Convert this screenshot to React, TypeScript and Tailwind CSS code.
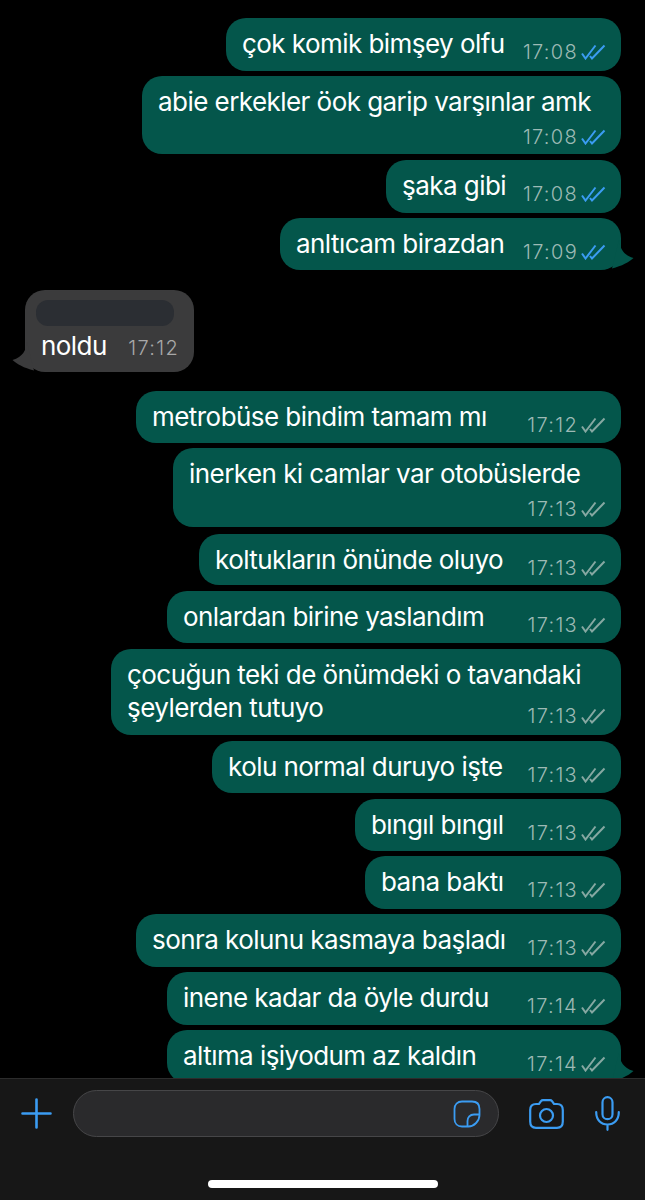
const messages = [
  { id: 1, text: 'çok komik bimşey olfu', time: '17:08', read: true, box: 'mt-[18px] h-[53px] w-[395px]' },
  { id: 2, text: 'abie erkekler öok garip varşınlar amk', time: '17:08', read: true, stacked: true, box: 'mt-[5px] h-[78px] w-[479px]' },
  { id: 3, text: 'şaka gibi', time: '17:08', read: true, box: 'mt-[6px] h-[53px] w-[235px]' },
  { id: 4, text: 'anltıcam birazdan', time: '17:09', read: true, tail: true, box: 'mt-[5px] h-[52px] w-[341px]' },
  { id: 6, text: 'metrobüse bindim tamam mı', time: '17:12', box: 'mt-[19px] h-[52px] w-[485px]' },
  { id: 7, text: 'inerken ki camlar var otobüslerde', time: '17:13', stacked: true, box: 'mt-[5px] h-[79px] w-[448px]' },
  { id: 8, text: 'koltukların önünde oluyo', time: '17:13', box: 'mt-[7px] h-[51px] w-[422px]' },
  { id: 9, text: 'onlardan birine yaslandım', time: '17:13', box: 'mt-[6px] h-[52px] w-[454px]' },
  { id: 10, text: 'çocuğun teki de önümdeki o tavandaki', second: 'şeylerden tutuyo', time: '17:13', box: 'mt-[6px] h-[86px] w-[510px]' },
  { id: 11, text: 'kolu normal duruyo işte', time: '17:13', box: 'mt-[6px] h-[52px] w-[409px]' },
  { id: 12, text: 'bıngıl bıngıl', time: '17:13', box: 'mt-[6px] h-[52px] w-[266px]' },
  { id: 13, text: 'bana baktı', time: '17:13', box: 'mt-[5px] h-[53px] w-[256px]' },
  { id: 14, text: 'sonra kolunu kasmaya başladı', time: '17:13', box: 'mt-[5px] h-[53px] w-[485px]' },
  { id: 15, text: 'inene kadar da öyle durdu', time: '17:14', box: 'mt-[5px] h-[53px] w-[454px]' },
  { id: 16, text: 'altıma işiyodum az kaldın', time: '17:14', tail: true, box: 'mt-[5px] h-[53px] w-[454px]' },
];

const bodyText = 'text-[26px] leading-[33px] tracking-[-0.55px] text-white';

function Ticks({ read }: { read?: boolean }) {
  return (
    <svg className={read ? 'h-[16px] w-[25px] text-[#3b9cf2]' : 'h-[16px] w-[25px] text-[#86a8a2]'} viewBox="0 0 25 16" fill="none" stroke="currentColor" strokeWidth={2}>
      <path d="M1 9.5 L4.5 14.5 L14.5 1.5" />
      <path d="M9 12 L11 14.5 L23.5 1.5" />
    </svg>
  );
}

function Tail({ className, fill }: { className: string; fill: string }) {
  return (
    <svg className={className} viewBox="0 0 22 30" fill={fill}>
      <path d="M7 0 C8 8 11 15 21.5 18 C17 22 10 26 0 28.5 Z" />
    </svg>
  );
}

function Meta({ time, read }: { time: string; read?: boolean }) {
  return (
    <div className="flex shrink-0 items-center gap-[3px]">
      <span className="text-[20px] font-light leading-[22px] tracking-[1.3px] text-[#9dbab5]">{time}</span>
      <Ticks read={read} />
    </div>
  );
}

function Outgoing({ m }: { m: (typeof messages)[number] }) {
  return (
    <div className={`relative flex shrink-0 flex-col rounded-[20px] bg-[#04564b] pl-4 pr-[15px] pt-[9px] ${m.box}`}>
      {m.second ? (
        <>
          <div className={bodyText}>{m.text}</div>
          <div className="flex items-start justify-between">
            <span className={bodyText}>{m.second}</span>
            <div className="mt-[14px]"><Meta time={m.time} read={m.read} /></div>
          </div>
        </>
      ) : m.stacked ? (
        <>
          <div className={bodyText}>{m.text}</div>
          <div className="mt-[8px] self-end"><Meta time={m.time} read={m.read} /></div>
        </>
      ) : (
        <div className="flex items-start justify-between">
          <span className={bodyText}>{m.text}</span>
          <div className="mt-[14px]"><Meta time={m.time} read={m.read} /></div>
        </div>
      )}
      {m.tail && <Tail className="absolute bottom-0 right-[-13px] h-[30px] w-[22px]" fill="#04564b" />}
    </div>
  );
}

function Incoming() {
  return (
    <div className="relative mt-[20px] ml-[25px] h-[82px] w-[169px] shrink-0 self-start rounded-[20px] bg-[#3b3b3c] pl-[11px] pr-[15px] pt-[10px]">
      <div className="h-[26px] w-[138px] rounded-[12px] bg-[#2b2e33]" />
      <div className="mt-[3px] flex items-start justify-between pl-[5px]">
        <span className={bodyText}>noldu</span>
        <span className="mt-[8px] text-[20px] font-light leading-[22px] tracking-[1.3px] text-[#a8a8a8]">17:12</span>
      </div>
      <Tail className="absolute bottom-0 left-[-13px] h-[30px] w-[22px] -scale-x-100" fill="#3b3b3c" />
    </div>
  );
}

export default function App() {
  return (
    <div className="flex h-[1200px] w-[645px] flex-col overflow-hidden bg-black font-['Inter',sans-serif]">
      <div className="flex min-h-0 flex-1 flex-col items-end overflow-hidden pr-[24px]">
        {messages.slice(0, 4).map((m) => <Outgoing key={m.id} m={m} />)}
        <Incoming />
        {messages.slice(4).map((m) => <Outgoing key={m.id} m={m} />)}
      </div>
      <div className="h-[122px] shrink-0 border-t border-[#2c2c2c] bg-[#171717] pt-[11px]">
        <div className="flex h-[47px] items-center pl-[21px] text-[#3b9cf2]">
          <svg className="h-[31px] w-[31px]" viewBox="0 0 31 31" fill="none" stroke="currentColor" strokeWidth={2.6} strokeLinecap="round">
            <path d="M15.5 1.5 V29.5 M1.5 15.5 H29.5" />
          </svg>
          <div className="ml-[21px] flex h-[47px] w-[426px] items-center justify-end rounded-full border border-[#464648] bg-[#2a2a2c] pr-[17px]">
            <svg className="h-[28px] w-[28px]" viewBox="0 0 28 28" fill="none" stroke="currentColor" strokeWidth={1.8}>
              <path d="M9 1.5 H19 C24 1.5 26.5 4.5 26.5 9 V15 C26.5 21 21 26.5 15.5 26.5 H9 C4.5 26.5 1.5 23.5 1.5 19 V9 C1.5 4.5 4.5 1.5 9 1.5 Z" />
              <path d="M26.5 14.5 H21 C17 14.5 14.5 17.5 14.5 21 V26.5" />
            </svg>
          </div>
          <svg className="ml-[30px] h-[30px] w-[35px]" viewBox="0 0 35 30" fill="none" stroke="currentColor" strokeWidth={2.2}>
            <path d="M7 5 H10 L12 2.2 C12.5 1.5 13 1.2 14 1.2 H21 C22 1.2 22.5 1.5 23 2.2 L25 5 H28 C31.5 5 33.8 7.2 33.8 11 V22.5 C33.8 26.5 31.5 28.8 28 28.8 H7 C3.5 28.8 1.2 26.5 1.2 22.5 V11 C1.2 7.2 3.5 5 7 5 Z" />
            <circle cx="17.5" cy="16.5" r="6.5" />
          </svg>
          <svg className="ml-[31px] h-[35px] w-[25px]" viewBox="0 0 25 35" fill="none" stroke="currentColor" strokeWidth={2.2} strokeLinecap="round">
            <rect x="7.5" y="1.2" width="10" height="22" rx="5" />
            <path d="M1.2 16 C1.2 24 6 28.5 12.5 28.5 C19 28.5 23.8 24 23.8 16 M12.5 28.5 V33.8" />
          </svg>
        </div>
        <div className="mx-auto mt-[43px] h-[8px] w-[230px] rounded-full bg-white" />
      </div>
    </div>
  );
}
